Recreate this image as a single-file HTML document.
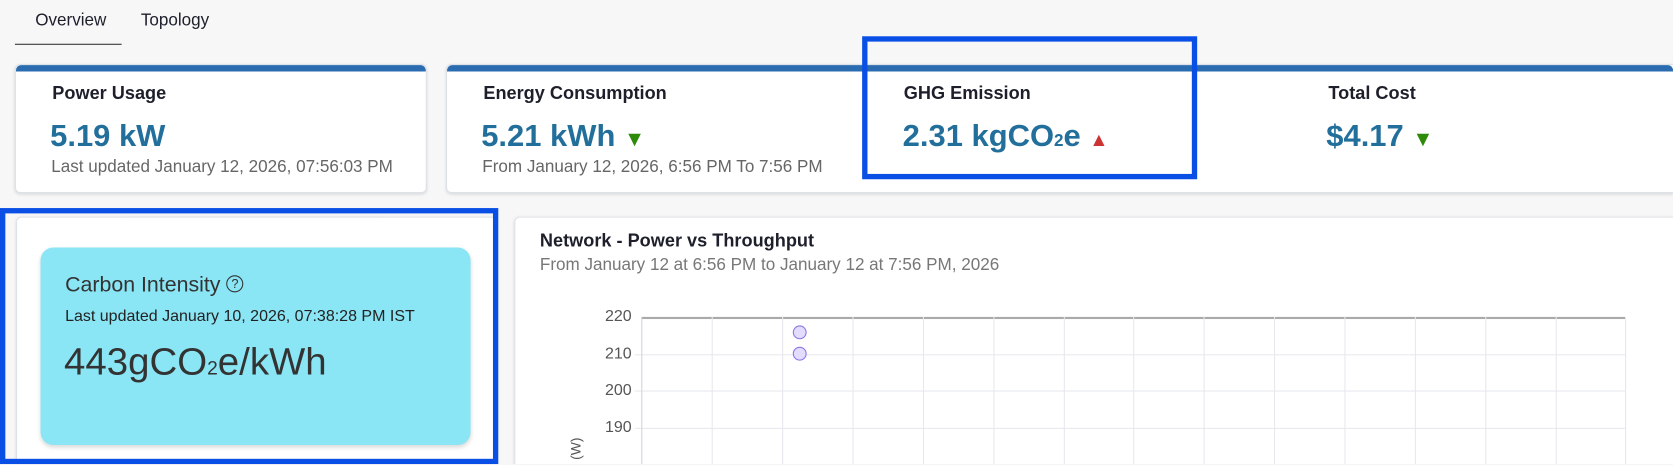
<!DOCTYPE html>
<html><head><meta charset="utf-8"><style>
*{margin:0;padding:0;box-sizing:border-box}
html,body{width:1673px;height:465px;overflow:hidden}
body{background:#f7f7f7;font-family:"Liberation Sans Narrow","Liberation Sans",sans-serif;position:relative;color:#1d1f2b}
#w{position:absolute;left:0;top:0;width:1568px;height:435px;overflow:hidden;transform:scale(1.067);transform-origin:0 0}
.a{position:absolute;white-space:nowrap}
.card{position:absolute;background:#fff;border:1px solid #dde2e8;border-radius:5px;box-shadow:0 1px 3px rgba(0,0,0,.12)}
.bar{position:absolute;left:0;right:0;top:0;height:6px;background:#2b6cb0;border-radius:5px 5px 0 0}
.lbl{font-size:17px;font-weight:bold}
.val{font-size:29px;font-weight:bold;color:#236f9c}
.sub{font-size:16px;color:#666}
.dn{color:#2e8b0a;font-size:20px}
.up{color:#cc3333;font-size:18px}
.gl{position:absolute;background:#e6e8ee}
.yl{position:absolute;font-size:15px;color:#555;text-align:right;width:30px}
</style></head><body><div id="w">
<div class="a" style="left:33px;top:11px;font-size:16px">Overview</div>
<div class="a" style="left:132px;top:11px;font-size:16px">Topology</div>
<div class="a" style="left:14px;top:41px;width:100px;height:1px;background:#333"></div>

<div class="card" style="left:14px;top:60px;width:386px;height:121px"><div class="bar"></div></div>
<div class="card" style="left:418px;top:60px;width:1150px;height:121px;border-right:none;border-radius:5px 0 0 5px"><div class="bar"></div></div>
<div class="a lbl" style="left:49px;top:78px">Power Usage</div>
<div class="a val" style="left:47px;top:112px">5.19 kW</div>
<div class="a sub" style="left:48px;top:148px">Last updated January 12, 2026, 07:56:03 PM</div>
<div class="a lbl" style="left:453px;top:78px">Energy Consumption</div>
<div class="a val" style="left:451px;top:112px">5.21 kWh <span class="dn">▼</span></div>
<div class="a sub" style="left:452px;top:148px">From January 12, 2026, 6:56 PM To 7:56 PM</div>
<div class="a lbl" style="left:847px;top:78px">GHG Emission</div>
<div class="a val" style="left:846px;top:112px">2.31 kgCO<span style="font-size:16px">2</span>e <span class="up">▲</span></div>
<div class="a lbl" style="left:1245px;top:78px">Total Cost</div>
<div class="a val" style="left:1243px;top:112px">$4.17 <span class="dn">▼</span></div>

<div class="card" style="left:15px;top:203px;width:450px;height:232px;border-bottom:none;border-radius:5px 5px 0 0"></div>
<div class="a" style="left:38px;top:232px;width:403px;height:185px;background:#8ae5f4;border-radius:12px;box-shadow:0 2px 4px rgba(0,0,0,.15)"></div>
<div class="a" style="left:61px;top:256px;font-size:20px;color:#333">Carbon Intensity <span style="display:inline-block;width:16px;height:16px;border:1.3px solid #333;border-radius:50%;font-size:12px;text-align:center;line-height:14px;vertical-align:3px">?</span></div>
<div class="a" style="left:61px;top:288px;font-size:15px;color:#222">Last updated January 10, 2026, 07:38:28 PM IST</div>
<div class="a" style="left:60px;top:318px;font-size:36px;color:#333">443gCO<span style="font-size:18px">2</span>e/kWh</div>

<div class="card" style="left:482px;top:203px;width:1086px;height:232px;border-bottom:none;border-right:none;border-radius:5px 0 0 0"></div>
<div class="a" style="left:506px;top:216px;font-size:17px;font-weight:bold">Network - Power vs Throughput</div>
<div class="a" style="left:506px;top:240px;font-size:16px;color:#777">From January 12 at 6:56 PM to January 12 at 7:56 PM, 2026</div>
<div class="gl" style="left:601px;top:297px;width:922px;height:2px;background:#aaa"></div>
<div class="gl" style="left:595px;top:332px;width:928px;height:1px"></div>
<div class="gl" style="left:595px;top:366px;width:928px;height:1px"></div>
<div class="gl" style="left:595px;top:401px;width:928px;height:1px"></div>
<div class="gl" style="left:601px;top:297px;width:1px;height:138px;background:#d0d4dc"></div>
<div class="gl" style="left:667px;top:297px;width:1px;height:138px"></div>
<div class="gl" style="left:733px;top:297px;width:1px;height:138px"></div>
<div class="gl" style="left:799px;top:297px;width:1px;height:138px"></div>
<div class="gl" style="left:865px;top:297px;width:1px;height:138px"></div>
<div class="gl" style="left:931px;top:297px;width:1px;height:138px"></div>
<div class="gl" style="left:997px;top:297px;width:1px;height:138px"></div>
<div class="gl" style="left:1062px;top:297px;width:1px;height:138px"></div>
<div class="gl" style="left:1128px;top:297px;width:1px;height:138px"></div>
<div class="gl" style="left:1194px;top:297px;width:1px;height:138px"></div>
<div class="gl" style="left:1260px;top:297px;width:1px;height:138px"></div>
<div class="gl" style="left:1326px;top:297px;width:1px;height:138px"></div>
<div class="gl" style="left:1392px;top:297px;width:1px;height:138px"></div>
<div class="gl" style="left:1458px;top:297px;width:1px;height:138px"></div>
<div class="gl" style="left:1523px;top:297px;width:1px;height:138px"></div>
<div class="yl" style="left:562px;top:288px">220</div>
<div class="yl" style="left:562px;top:323px">210</div>
<div class="yl" style="left:562px;top:357px">200</div>
<div class="yl" style="left:562px;top:392px">190</div>
<div class="a" style="left:529px;top:413px;font-size:13px;color:#555;transform:rotate(-90deg)">(W)</div>
<div class="a" style="left:743px;top:305px;width:13px;height:13px;border-radius:50%;background:#e3dcfc;border:1px solid #8c74e8"></div>
<div class="a" style="left:743px;top:325px;width:13px;height:13px;border-radius:50%;background:#e3dcfc;border:1px solid #8c74e8"></div>

<div class="a" style="left:808px;top:34px;width:314px;height:134px;border:5px solid #0a4fe5"></div>
<div class="a" style="left:0;top:195px;width:467px;height:240px;border:5px solid #0a4fe5"></div>
</div></body></html>
